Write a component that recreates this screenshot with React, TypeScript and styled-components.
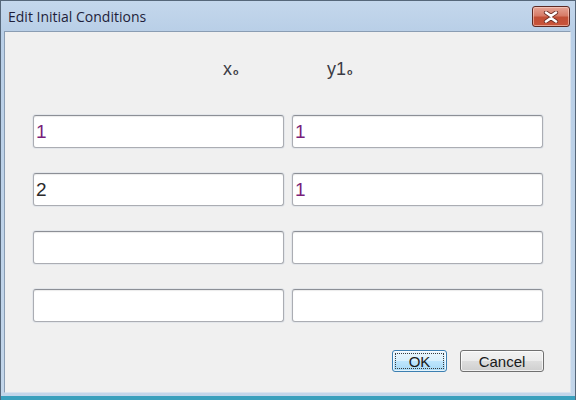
import React from 'react';
import styled, { createGlobalStyle } from 'styled-components';

const GlobalStyle = createGlobalStyle`
  html, body {
    margin: 0;
    padding: 0;
    background: #ffffff;
  }
  * {
    box-sizing: border-box;
  }
`;

const rows = [
  { x: '1', y: '1', xColor: '#7a1f7a' },
  { x: '2', y: '1', xColor: '#2b2b2b' },
  { x: '', y: '', xColor: '#2b2b2b' },
  { x: '', y: '', xColor: '#2b2b2b' },
];

export default function App() {
  return (
    <>
      <GlobalStyle />
      <Window>
        <TitleBar>
          <Title>Edit Initial Conditions</Title>
          <CloseButton aria-label="Close">
            <svg width="16" height="12" viewBox="0 0 16 12">
              <path
                d="M3 1.5 L8 5 L13 1.5 M3 10.5 L8 7 L13 10.5"
                stroke="#6a2c24"
                strokeWidth="4.2"
                fill="none"
                strokeLinecap="round"
              />
              <path
                d="M3 1.5 L8 5 L13 1.5 M3 10.5 L8 7 L13 10.5"
                stroke="#ffffff"
                strokeWidth="2.6"
                fill="none"
                strokeLinecap="round"
              />
            </svg>
          </CloseButton>
        </TitleBar>
        <Client>
          <HeaderRow>
            <ColLabel $indent={190}>
              x<Sub>o</Sub>
            </ColLabel>
            <ColLabel $indent={35}>
              y1<Sub>o</Sub>
            </ColLabel>
          </HeaderRow>
          <Grid>
            {rows.map((r, i) => (
              <React.Fragment key={i}>
                <Field $color={r.xColor}>{r.x}</Field>
                <Field $color="#7a1f7a">{r.y}</Field>
              </React.Fragment>
            ))}
          </Grid>
          <Actions>
            <DialogButton $primary $width={55}>OK</DialogButton>
            <DialogButton $width={84}>Cancel</DialogButton>
          </Actions>
        </Client>
      </Window>
    </>
  );
}

const Window = styled.div`
  width: 576px;
  height: 400px;
  display: flex;
  flex-direction: column;
  border: 1px solid #56677a;
  border-bottom: none;
  background: linear-gradient(to bottom, #c4d7ec 0px, #b9cfe7 30px, #c3d6ea 100%);
  padding: 0 4px 0 3px;
  font-family: "Liberation Sans", Arial, sans-serif;
  box-shadow: inset 0 -4px 0 #3aa0bd;
`;

const TitleBar = styled.div`
  height: 30px;
  display: flex;
  align-items: flex-start;
  justify-content: space-between;
  padding: 5px 1px 0 4px;
`;

const Title = styled.div`
  font-family: "Open Sans", "Noto Sans", sans-serif;
  font-size: 14px;
  color: #1e1e3a;
  line-height: 22px;
`;

const CloseButton = styled.div`
  width: 38px;
  height: 21px;
  border: 1px solid #5d2a24;
  border-radius: 3px;
  display: flex;
  align-items: center;
  justify-content: center;
  background: linear-gradient(to bottom, #e6a495 0%, #d77c68 45%, #c24f36 55%, #c9543a 100%);
  box-shadow: inset 0 0 0 1px rgba(255, 220, 210, 0.55);
`;

const Client = styled.div`
  height: 362px;
  background: #f0f0f0;
  border: 1px solid #8a9db3;
  border-right-color: #d9e3ee;
  border-bottom-color: #d9e3ee;
  padding: 0 26px 0 28px;
  display: flex;
  flex-direction: column;
`;

const HeaderRow = styled.div`
  display: grid;
  grid-template-columns: 251px 251px;
  column-gap: 8px;
  height: 83px;
  padding-top: 26px;
`;

const ColLabel = styled.div<{ $indent: number }>`
  padding-left: ${(p) => p.$indent}px;
  font-size: 18px;
  line-height: 22px;
  color: #3b3b45;
`;

const Sub = styled.span`
  font-size: 9px;
  font-weight: bold;
  vertical-align: baseline;
  margin-left: 1px;
`;

const Grid = styled.div`
  display: grid;
  grid-template-columns: 251px 251px;
  column-gap: 8px;
  row-gap: 25px;
`;

const Field = styled.div<{ $color: string }>`
  height: 33px;
  background: #ffffff;
  border: 1px solid #abadb3;
  border-top-color: #8c8f96;
  border-radius: 3px;
  box-shadow: inset 0 1px 1px rgba(0, 0, 0, 0.08), 0 0 0 1px #e3e6ea;
  padding: 0 2px;
  font-size: 19px;
  line-height: 31px;
  color: ${(p) => p.$color};
`;

const Actions = styled.div`
  display: flex;
  justify-content: flex-end;
  gap: 13px;
  margin-top: 28px;
`;

const DialogButton = styled.div<{ $primary?: boolean; $width: number }>`
  width: ${(p) => p.$width}px;
  height: 22px;
  border: 1px solid ${(p) => (p.$primary ? '#3c7fb1' : '#707070')};
  border-radius: 3px;
  display: flex;
  align-items: center;
  justify-content: center;
  font-size: 15px;
  color: #1a1a1a;
  background: ${(p) =>
    p.$primary
      ? 'linear-gradient(to bottom, #eaf6fd 0%, #d9f0fc 50%, #bee6fd 51%, #a7d9f5 100%)'
      : 'linear-gradient(to bottom, #f2f2f2 0%, #ebebeb 50%, #dddddd 51%, #cfcfcf 100%)'};
  box-shadow: inset 0 0 0 1px rgba(255, 255, 255, 0.7);
  outline: ${(p) => (p.$primary ? '1px dotted #3a3a3a' : 'none')};
  outline-offset: -4px;
`;
